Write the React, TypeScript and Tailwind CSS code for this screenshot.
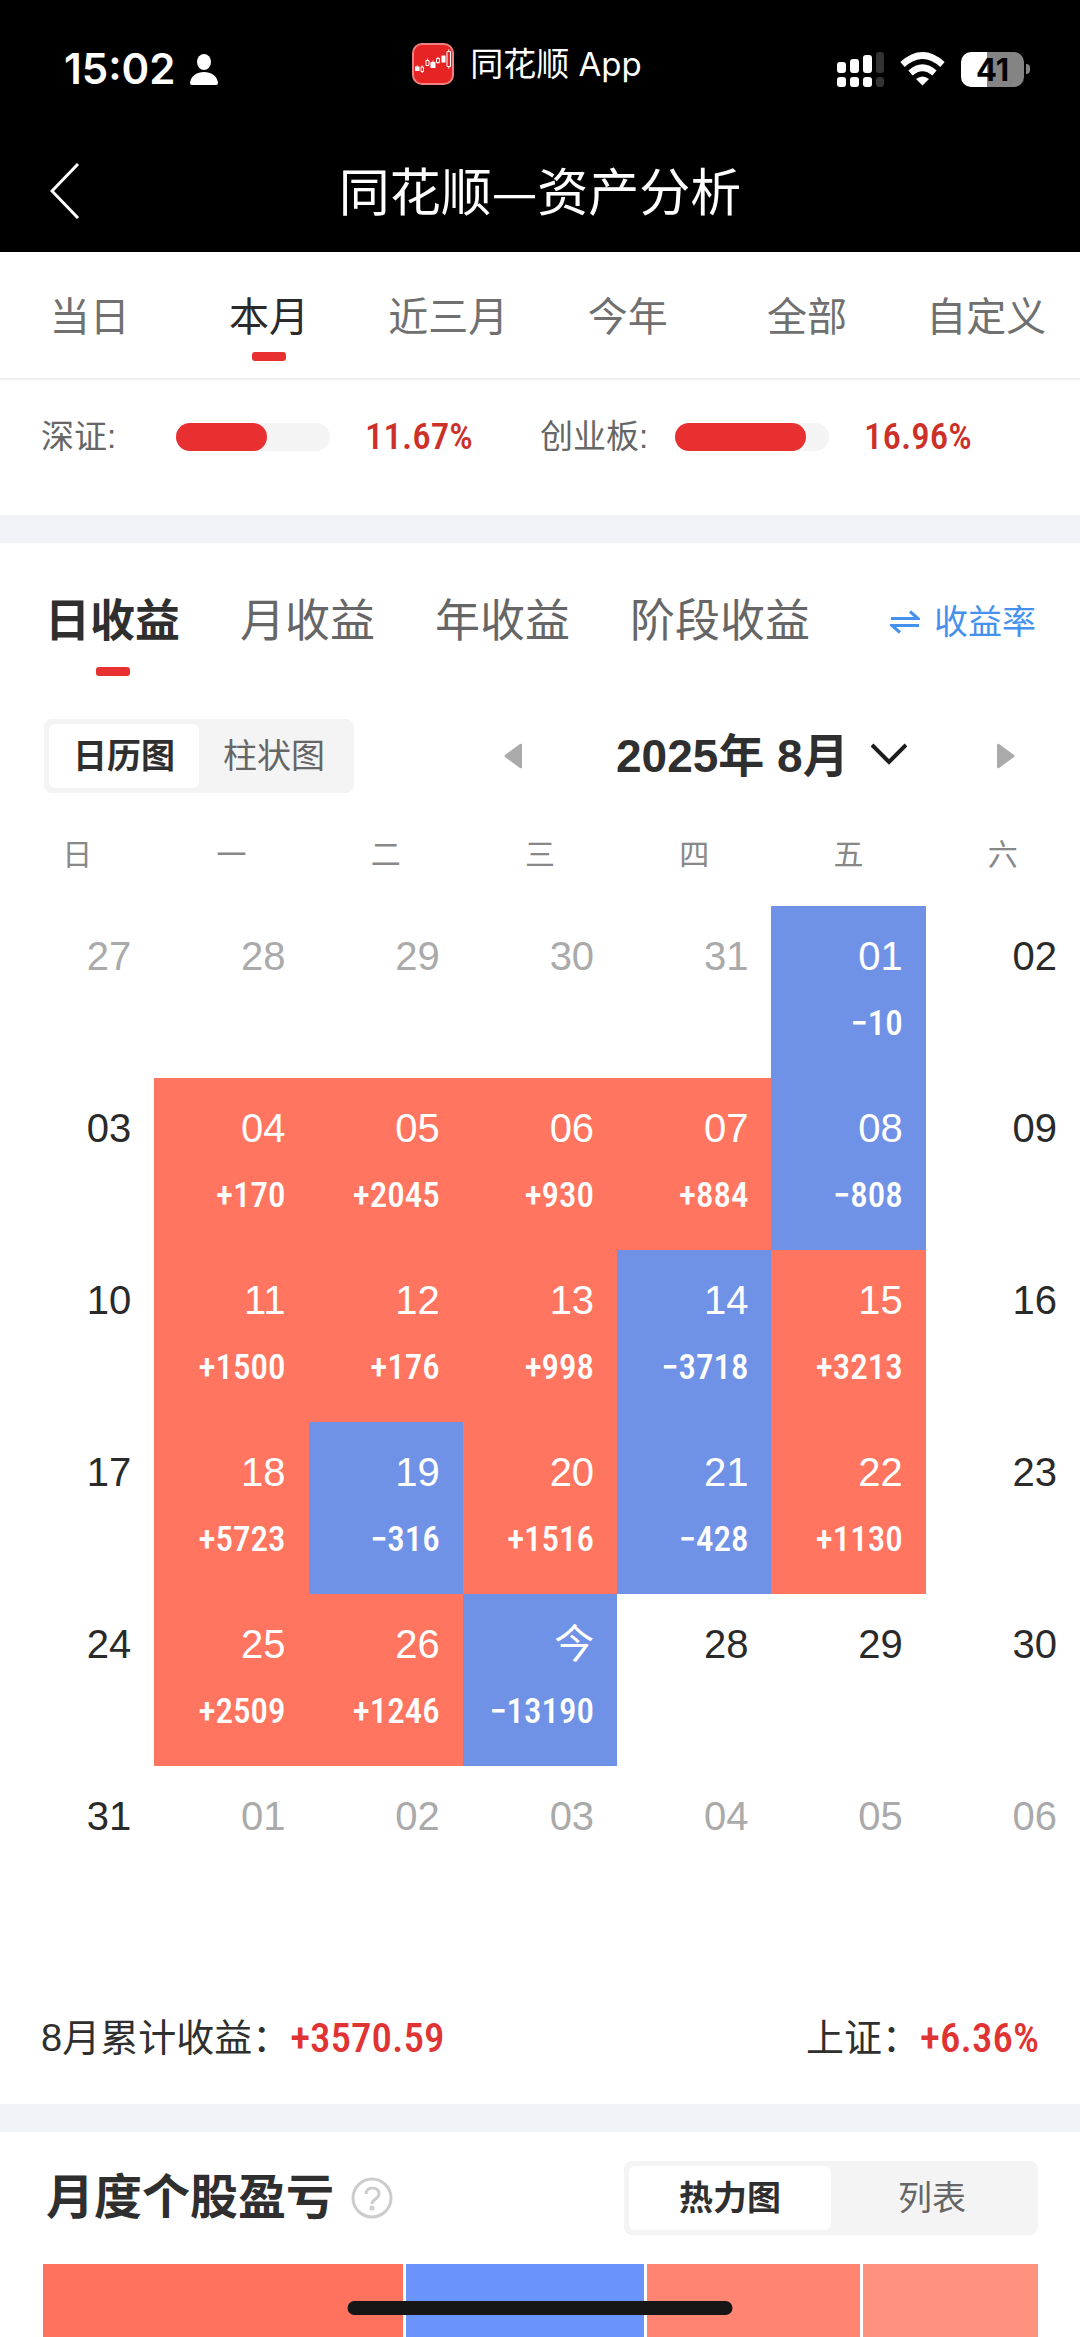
import { useState } from 'react';
import clsx from 'clsx';

const PERIODS = ['当日', '本月', '近三月', '今年', '全部', '自定义'];
const PROFIT_TABS = ['日收益', '月收益', '年收益', '阶段收益'];
const WEEKDAYS = ['日', '一', '二', '三', '四', '五', '六'];

const INDEXES = [
  { name: '深证', value: '11.67%', percent: 59 },
  { name: '创业板', value: '16.96%', percent: 85 },
];

type Day = { label: string; amount?: number; muted?: boolean };

const WEEKS: Day[][] = [
  [
    { label: '27', muted: true },
    { label: '28', muted: true },
    { label: '29', muted: true },
    { label: '30', muted: true },
    { label: '31', muted: true },
    { label: '01', amount: -10 },
    { label: '02' },
  ],
  [
    { label: '03' },
    { label: '04', amount: 170 },
    { label: '05', amount: 2045 },
    { label: '06', amount: 930 },
    { label: '07', amount: 884 },
    { label: '08', amount: -808 },
    { label: '09' },
  ],
  [
    { label: '10' },
    { label: '11', amount: 1500 },
    { label: '12', amount: 176 },
    { label: '13', amount: 998 },
    { label: '14', amount: -3718 },
    { label: '15', amount: 3213 },
    { label: '16' },
  ],
  [
    { label: '17' },
    { label: '18', amount: 5723 },
    { label: '19', amount: -316 },
    { label: '20', amount: 1516 },
    { label: '21', amount: -428 },
    { label: '22', amount: 1130 },
    { label: '23' },
  ],
  [
    { label: '24' },
    { label: '25', amount: 2509 },
    { label: '26', amount: 1246 },
    { label: '今', amount: -13190 },
    { label: '28' },
    { label: '29' },
    { label: '30' },
  ],
  [
    { label: '31' },
    { label: '01', muted: true },
    { label: '02', muted: true },
    { label: '03', muted: true },
    { label: '04', muted: true },
    { label: '05', muted: true },
    { label: '06', muted: true },
  ],
];

const HEAT_BLOCKS = [
  { weight: 360, color: 'bg-[#ff725e]' },
  { weight: 238, color: 'bg-[#6a94fc]' },
  { weight: 213, color: 'bg-[#ff8472]' },
  { weight: 175, color: 'bg-[#ff917f]' },
];

const NUM = "font-['Roboto_Condensed','Liberation_Sans_Narrow',Roboto,sans-serif] font-medium";

const formatAmount = (n: number) => (n < 0 ? `−${Math.abs(n)}` : `+${n}`);

const AppLogo = () => (
  <svg width="42" height="42" viewBox="0 0 42 42" aria-hidden="true">
    <rect x="1" y="1" width="40" height="40" rx="9" fill="#e62424" stroke="#f28080" strokeWidth="2" />
    <path d="M3 23.500h4.500v4.500H3zM4.700 22.500h1v1h-1zM18.500 19h5v6h-5zM20.500 17.500h1v1.500h-1zM29.500 12.500h4v7h-4z" fill="#fff" />
    <path
      d="M9 24h2.500v4.500H9zM14 17.500h3v5h-3zM24.500 15.500h3v4h-3zM35 8.500h3.500v15H35zM15.500 15.500v2M10.200 22.500V24M10.200 28.500V30M26 14v1.500M26 19.500V21M36.700 6.500v2M36.700 23.500v2"
      fill="none"
      stroke="#fff"
      strokeWidth="1"
    />
  </svg>
);

const StatusBar = () => (
  <div className="grid grid-cols-3 h-[126px] pt-[10px]">
    <div className="flex items-center gap-[15px] pl-16 pt-[2px]">
      <span className="font-[Inter,sans-serif] text-[42px] leading-[42px] font-semibold">15:02</span>
      <svg width="28" height="31" viewBox="0 0 28 31" fill="#fff" aria-hidden="true">
        <ellipse cx="14" cy="8" rx="7" ry="8" />
        <path d="M2 31Q0 31 0 28.500C1 22 7 18 14 18s13 4 14 10.500Q28 31 26 31z" />
      </svg>
    </div>
    <div className="flex items-center justify-center gap-4 pr-[26px] pb-[8px]">
      <AppLogo />
      <span className="font-[Inter,'Noto_Sans_CJK_SC',sans-serif] text-[33px] leading-[40px] whitespace-nowrap">
        同花顺 App
      </span>
    </div>
    <div className="flex items-center justify-end gap-4 pr-[50px] pt-[2px]">
      <svg width="47" height="35" viewBox="0 0 47 35" fill="#fff" aria-hidden="true">
        <rect x="0" y="10" width="9" height="11" rx="3" />
        <rect x="13" y="7" width="9" height="14" rx="3" />
        <rect x="26" y="3" width="9" height="18" rx="3" />
        <rect x="39" y="0" width="8" height="21" rx="3" fill="#333" />
        <rect x="0" y="25" width="9" height="10" rx="3" />
        <rect x="13" y="25" width="9" height="10" rx="3" />
        <rect x="26" y="25" width="9" height="10" rx="3" />
        <rect x="39" y="25" width="8" height="10" rx="3" fill="#333" />
      </svg>
      <svg width="45" height="34" viewBox="0 0 45 34" aria-hidden="true">
        <path d="M2.500 12.500Q22.500 -5.500 42.500 12.500" fill="none" stroke="#fff" strokeWidth="6.500" />
        <path d="M10.500 21Q22.500 10.500 34.500 21" fill="none" stroke="#fff" strokeWidth="6.500" />
        <path d="M16 27Q22.500 22 29 27L22.500 33.500z" fill="#fff" />
      </svg>
      <div className="flex items-center gap-[2px]">
        <div className="flex h-[35px] w-[63px] items-center justify-center rounded-[10px] bg-linear-to-r from-white from-41% to-[#848484] to-41%">
          <span className="font-[Inter,sans-serif] text-[31px] leading-[35px] font-bold text-black">41</span>
        </div>
        <div className="h-[10px] w-1 rounded-r-full bg-[#848484]" />
      </div>
    </div>
  </div>
);

type SegmentedProps = {
  options: string[];
  buttonWidth: string;
};

const Segmented = ({ options, buttonWidth }: SegmentedProps) => {
  const [active, setActive] = useState(options[0]);

  return (
    <div className="flex rounded-lg bg-[#f4f4f4] p-[5px]">
      {options.map((option) => (
        <button
          key={option}
          type="button"
          onClick={() => setActive(option)}
          className={clsx(
            'h-16 rounded-md text-[34px] leading-[40px]',
            buttonWidth,
            option === active ? 'bg-white font-bold text-[#2f2f2f]' : 'text-[#666]',
          )}
        >
          {option}
        </button>
      ))}
    </div>
  );
};

const DayCell = ({ day }: { day: Day }) => {
  const hasAmount = day.amount !== undefined;

  return (
    <td
      className={clsx(
        'h-[172px] p-0 pt-[30px] pr-[23px] text-right align-top',
        hasAmount && (day.amount! < 0 ? 'bg-[#7092e6]' : 'bg-[#ff755f]'),
        hasAmount ? 'text-white' : day.muted ? 'text-[#aaa]' : 'text-[#2a2a2a]',
      )}
    >
      <div className="h-10 text-[40px] leading-[40px]">{day.label}</div>
      {hasAmount && (
        <div className={clsx(NUM, 'mt-7 text-[35px] leading-[40px]')}>
          {formatAmount(day.amount!)}
        </div>
      )}
    </td>
  );
};

const App = () => {
  const [period, setPeriod] = useState('本月');
  const [profitTab, setProfitTab] = useState('日收益');

  return (
    <div className="overflow-x-hidden bg-white font-['Liberation_Sans','Noto_Sans_CJK_SC',sans-serif] text-[#2f2f2f]">
      <header className="bg-black text-white">
        <StatusBar />
        <div className="grid h-[126px] grid-cols-[120px_1fr_120px] items-center">
          <button type="button" aria-label="返回" className="pt-1 pl-[50px]">
            <svg width="30" height="56" viewBox="0 0 30 56" fill="none" stroke="#fff" strokeWidth="3">
              <path d="M28 1L2 28l26 27" />
            </svg>
          </button>
          <h1 className="text-center font-['Noto_Sans_CJK_SC',sans-serif] text-[51px] leading-[60px]">
            同花顺—资产分析
          </h1>
        </div>
      </header>

      <nav className="grid grid-cols-6 border-b-2 border-[#f0f0f0] pr-1">
        {PERIODS.map((item) => (
          <button
            key={item}
            type="button"
            onClick={() => setPeriod(item)}
            className={clsx(
              'flex h-[126px] flex-col items-center pt-10 text-[40px] leading-[50px]',
              item === period ? 'text-[#2a2a2a]' : 'text-[#707070]',
            )}
          >
            {item}
            {item === period && <span className="mt-[10px] h-[9px] w-[34px] rounded-[3px] bg-[#e93030]" />}
          </button>
        ))}
      </nav>

      <section className="grid h-[135px] grid-cols-2 px-[41px] pt-[37px]">
        {INDEXES.map((item) => (
          <div key={item.name} className="flex h-10 items-center">
            <span className="w-[135px] text-[33px] leading-[40px] text-[#666]">{item.name}:</span>
            <div className="h-7 w-[154px] rounded-full bg-[#f4f4f4]">
              <div className="h-7 rounded-full bg-[#e93030]" style={{ width: `${item.percent}%` }} />
            </div>
            <span className={clsx(NUM, 'ml-[35px] text-[37px] leading-[40px] text-[#cc3029]')}>
              {item.value}
            </span>
          </div>
        ))}
      </section>

      <div className="h-7 bg-[#f2f3f8]" />

      <section>
        <div className="flex items-start justify-between pt-[49px] pr-11 pl-[45px]">
          <div className="flex gap-[60px]">
            {PROFIT_TABS.map((item) => (
              <button
                key={item}
                type="button"
                onClick={() => setProfitTab(item)}
                className={clsx(
                  'flex h-[84px] flex-col items-center text-[45px] leading-[60px]',
                  item === profitTab ? 'font-bold text-[#2f2f2f]' : 'text-[#666]',
                )}
              >
                {item}
                {item === profitTab && (
                  <span className="mt-[15px] h-[9px] w-[34px] rounded-[3px] bg-[#e93030]" />
                )}
              </button>
            ))}
          </div>
          <button type="button" className="flex h-[60px] items-center gap-[14px] text-[34px] leading-[40px] text-[#4691ee]">
            <svg width="30" height="24" viewBox="0 0 30 24" fill="none" stroke="currentColor" strokeWidth="3">
              <path d="M1 8.500h27L20 1.500M29 15.500H2l8 7" />
            </svg>
            收益率
          </button>
        </div>

        <div className="flex items-center justify-between pt-[43px] pr-[65px] pl-11">
          <Segmented options={['日历图', '柱状图']} buttonWidth="w-[150px]" />
          <div className="flex items-center gap-[90px]">
            <button type="button" aria-label="上个月">
              <svg width="18" height="26" viewBox="0 0 18 26" fill="#aaa">
                <path d="M18 2v22q0 2-2 1L1 14q-1-1 0-2L16 1q2-1 2 1z" />
              </svg>
            </button>
            <div className="relative">
              <select
                aria-label="月份"
                className="appearance-none pr-[58px] pl-1 text-[46px] leading-[60px] font-bold text-[#2f2f2f]"
              >
                <option>2025年 8月</option>
              </select>
              <svg
                className="pointer-events-none absolute top-[17px] right-0"
                width="36"
                height="22"
                viewBox="0 0 36 22"
                fill="none"
                stroke="#1c1c1c"
                strokeWidth="4"
              >
                <path d="M1 2l17 17L35 2" />
              </svg>
            </div>
            <button type="button" aria-label="下个月">
              <svg width="18" height="26" viewBox="0 0 18 26" fill="#aaa">
                <path d="M0 2v22q0 2 2 1l15-11q1-1 0-2L2 1Q0 0 0 2z" />
              </svg>
            </button>
          </div>
        </div>

        <table className="mt-[42px] w-full table-fixed">
          <thead>
            <tr>
              {WEEKDAYS.map((day) => (
                <th key={day} scope="col" className="h-[71px] p-0 align-top text-[30px] leading-[40px] font-normal text-[#888]">
                  {day}
                </th>
              ))}
            </tr>
          </thead>
          <tbody>
            {WEEKS.map((week, i) => (
              <tr key={i}>
                {week.map((day, j) => (
                  <DayCell key={j} day={day} />
                ))}
              </tr>
            ))}
          </tbody>
        </table>

        <div className="flex h-[166px] items-center justify-between px-[41px] pt-[33px] text-[38px] leading-[50px]">
          <div className="flex items-center">
            <span>8月累计收益：</span>
            <span className={clsx(NUM, 'text-[41px] text-[#e03434]')}>+3570.59</span>
          </div>
          <div className="flex items-center">
            <span>上证：</span>
            <span className={clsx(NUM, 'text-[41px] text-[#e03434]')}>+6.36%</span>
          </div>
        </div>
      </section>

      <div className="h-7 bg-[#f2f3f8]" />

      <section className="pr-[42px] pl-[43px]">
        <div className="flex items-center justify-between pt-[29px] pb-[29px]">
          <div className="flex items-center gap-[17px] pl-[3px]">
            <h2 className="text-[48px] leading-[60px] font-bold">月度个股盈亏</h2>
            <button type="button" aria-label="说明">
              <svg width="42" height="42" viewBox="0 0 42 42" fill="none" stroke="#ccc" strokeWidth="3">
                <circle cx="21" cy="21" r="19" />
                <path d="M15 17c0-8 13-8 13 0 0 5-7 5-7 10" />
                <circle cx="21" cy="31" r="1" />
              </svg>
            </button>
          </div>
          <Segmented options={['热力图', '列表']} buttonWidth="w-[202px]" />
        </div>
        <div className="flex h-[73px] gap-[3px]">
          {HEAT_BLOCKS.map((block) => (
            <div key={block.weight} className={block.color} style={{ flexGrow: block.weight }} />
          ))}
        </div>
      </section>

      <div className="fixed bottom-[22px] left-1/2 h-[14px] w-[385px] -translate-x-1/2 rounded-full bg-[#161616]" />
    </div>
  );
};

export default App;
